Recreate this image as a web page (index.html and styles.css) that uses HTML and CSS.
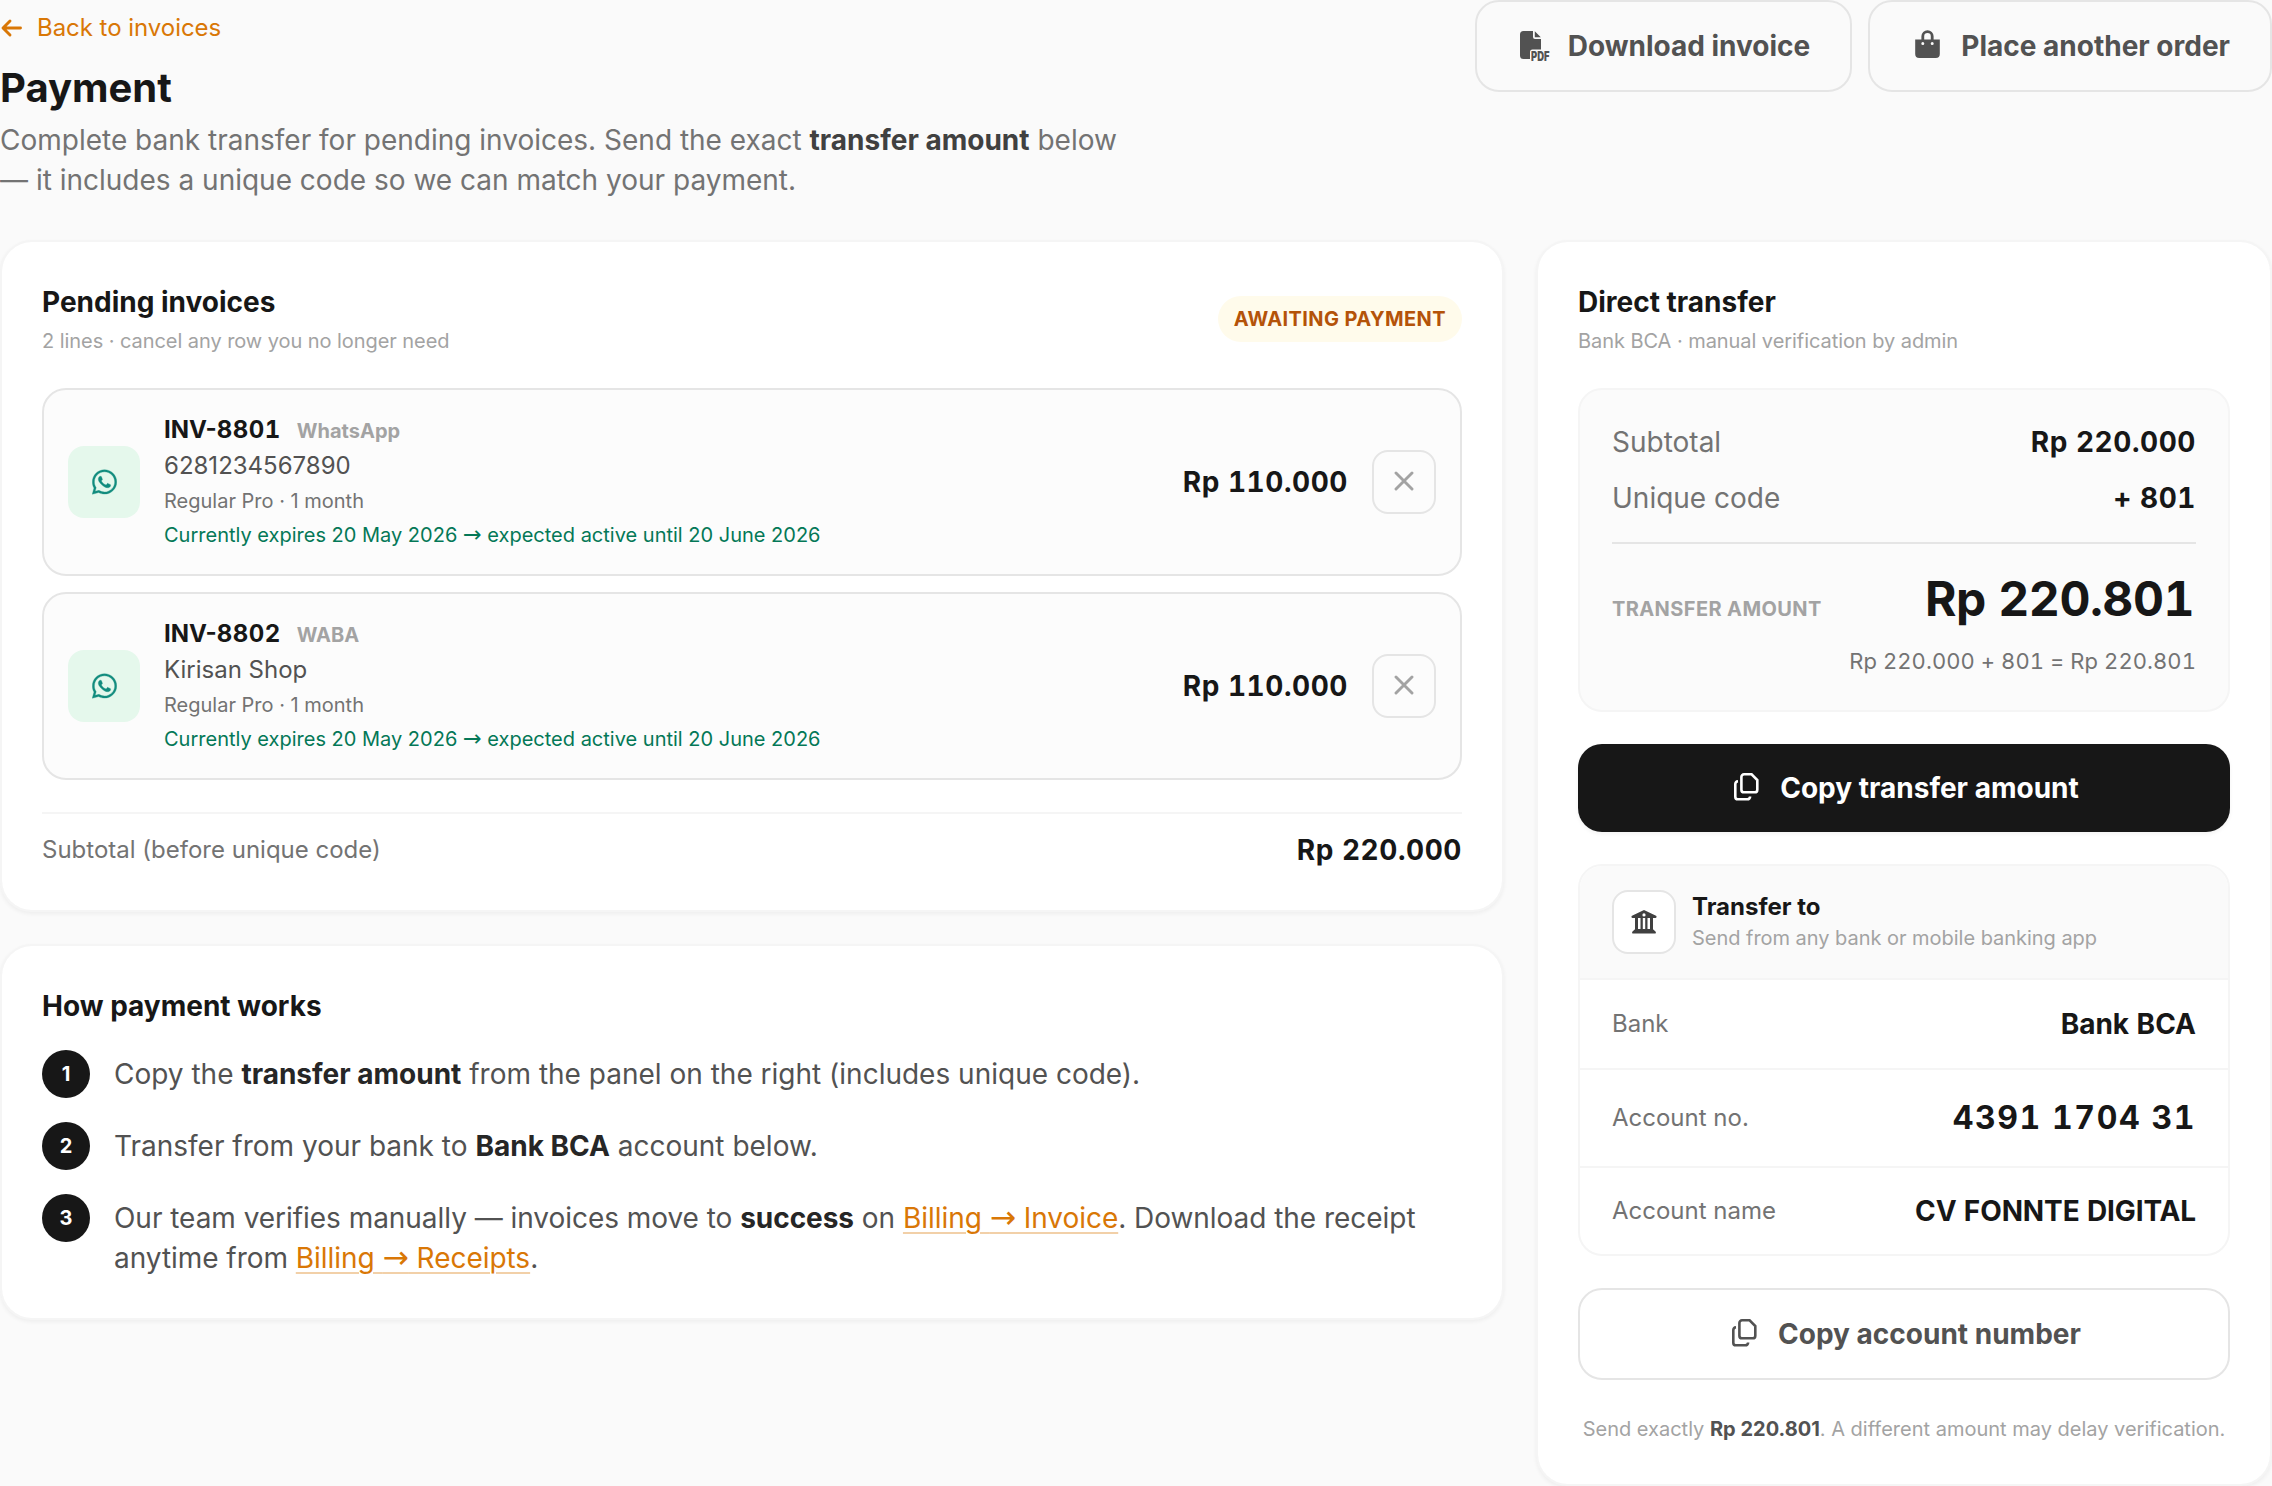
FILE: index.html
```html
<!DOCTYPE html>
<html lang="en">
<head>
<meta charset="utf-8">
<title>Payment</title>
<link rel="stylesheet" href="styles.css">
</head>
<body>
<svg width="0" height="0" class="sprite" aria-hidden="true">
  <symbol id="wa" viewBox="0 0 448 512"><path d="M380.9 97.1C339 55.1 283.2 32 223.9 32c-122.4 0-222 99.6-222 222 0 39.1 10.2 77.3 29.6 111L0 480l117.7-30.9c32.4 17.7 68.9 27 106.1 27h.1c122.3 0 224.1-99.6 224.1-222 0-59.3-25.2-115-67.1-157zm-157 341.6c-33.2 0-65.7-8.9-94-25.7l-6.7-4-69.8 18.3L72 359.2l-4.4-7c-18.5-29.4-28.2-63.3-28.2-98.2 0-101.7 82.8-184.5 184.6-184.5 49.3 0 95.6 19.2 130.4 54.1 34.8 34.9 56.2 81.2 56.1 130.5 0 101.8-84.9 184.6-186.6 184.6zm101.2-138.2c-5.5-2.8-32.8-16.2-37.9-18-5.1-1.9-8.8-2.8-12.5 2.8-3.7 5.6-14.3 18-17.6 21.8-3.2 3.7-6.5 4.2-12 1.4-32.6-16.3-54-29.1-75.5-66-5.7-9.8 5.7-9.1 16.3-30.3 1.8-3.7.9-6.9-.5-9.7-1.4-2.8-12.5-30.1-17.1-41.2-4.5-10.8-9.1-9.3-12.5-9.5-3.2-.2-6.9-.2-10.6-.2-3.7 0-9.7 1.4-14.8 6.9-5.1 5.6-19.4 19-19.4 46.3 0 27.3 19.9 53.7 22.6 57.4 2.8 3.7 39.1 59.7 94.8 83.8 35.2 15.2 49 16.5 66.6 13.9 10.7-1.6 32.8-13.4 37.4-26.4 4.6-13 4.6-24.1 3.2-26.4-1.3-2.5-5-3.900-10.500-6.600z" fill="currentColor" stroke="currentColor" stroke-width="6"/></symbol>
  <symbol id="copy" viewBox="0 0 35 30"><path d="M15 2.3h7.6l5.7 5.7v9.7a2.6 2.6 0 0 1-2.6 2.6H15a2.6 2.6 0 0 1-2.6-2.6V4.9a2.6 2.6 0 0 1 2.6-2.6zM9 9.2a2.9 2.9 0 0 0-2.7 2.8v12.7a2.6 2.6 0 0 0 2.6 2.6h9.5a2.7 2.7 0 0 0 2.7-2.8" fill="none" stroke="currentColor" stroke-width="2.6"/></symbol>
  <symbol id="x" viewBox="0 0 20 20"><path d="M2 2l16 16M18 2L2 18" fill="none" stroke="currentColor" stroke-width="2.9" stroke-linecap="round"/></symbol>
</svg>

<main class="page">
  <header class="top">
    <div class="intro">
      <a class="back"><svg class="back-icon" viewBox="0 0 22 20"><path d="M20 10H2.8M9.5 3L2.5 10l7 7" fill="none" stroke="currentColor" stroke-width="2.9" stroke-linecap="round" stroke-linejoin="round"/></svg>Back to invoices</a>
      <h1>Payment</h1>
      <p>Complete bank transfer for pending invoices. Send the exact <strong>transfer amount</strong> below — it includes a unique code so we can match your payment.</p>
    </div>
    <div class="actions">
      <button class="btn btn-outline"><svg class="btn-icon" viewBox="0 0 35 30"><path d="M6.5 1H16v6a2 2 0 0 0 2 2h6v10.500H15.500a2.500 2.500 0 0 0-2.500 2.500v7H6.500A3.500 3.500 0 0 1 3 25.500v-21A3.500 3.500 0 0 1 6.500 1zM17.800 1.300L23.800 7.300H17.800z" fill="currentColor"/><text class="pdf-label" x="14" y="31" textLength="18.500" lengthAdjust="spacingAndGlyphs">PDF</text></svg>Download invoice</button>
      <button class="btn btn-outline"><svg class="btn-icon" viewBox="0 0 35 30"><path fill-rule="evenodd" d="M5.200 9.500h24.600v14.500a4 4 0 0 1-4 4H9.200a4 4 0 0 1-4-4zM12.800 12a1.500 1.500 0 1 0 0 3 1.500 1.500 0 0 0 0-3zm9.400 0a1.500 1.500 0 1 0 0 3 1.500 1.500 0 0 0 0-3z" fill="currentColor"/><path d="M12.800 10V6.300a4.700 4.700 0 0 1 9.400 0V10" fill="none" stroke="currentColor" stroke-width="2.800"/></svg>Place another order</button>
    </div>
  </header>

  <div class="columns">
    <div class="left">
      <section class="card">
        <div class="card-head">
          <div>
            <h2>Pending invoices</h2>
            <p class="sub">2 lines · cancel any row you no longer need</p>
          </div>
          <span class="badge">AWAITING PAYMENT</span>
        </div>
        <div class="invoices">
          <article class="invoice">
            <span class="tile"><svg><use href="#wa"/></svg></span>
            <div class="info">
              <div class="number"><b><span class="prefix">INV-</span>8801</b> <small>WhatsApp</small></div>
              <div class="name">6281234567890</div>
              <div class="plan">Regular Pro · 1 month</div>
              <div class="expiry">Currently expires 20 May 2026 <span class="arrow">→</span> expected active until 20 June 2026</div>
            </div>
            <span class="price">Rp 110.000</span>
            <button class="close" aria-label="Cancel"><svg><use href="#x"/></svg></button>
          </article>
          <article class="invoice">
            <span class="tile"><svg><use href="#wa"/></svg></span>
            <div class="info">
              <div class="number"><b><span class="prefix">INV-</span>8802</b> <small>WABA</small></div>
              <div class="name">Kirisan Shop</div>
              <div class="plan">Regular Pro · 1 month</div>
              <div class="expiry">Currently expires 20 May 2026 <span class="arrow">→</span> expected active until 20 June 2026</div>
            </div>
            <span class="price">Rp 110.000</span>
            <button class="close" aria-label="Cancel"><svg><use href="#x"/></svg></button>
          </article>
        </div>
        <div class="list-total"><span>Subtotal (before unique code)</span><b class="money">Rp 220.000</b></div>
      </section>

      <section class="card">
        <h2>How payment works</h2>
        <ol class="steps">
          <li><i>1</i><p>Copy the <strong>transfer amount</strong> from the panel on the right (includes unique code).</p></li>
          <li><i>2</i><p>Transfer from your bank to <strong>Bank BCA</strong> account below.</p></li>
          <li><i>3</i><p class="tight">Our team verifies manually — invoices move to <strong>success</strong> on <a>Billing <span class="arrow">→</span> Invoice</a>. Download the receipt anytime from <a>Billing <span class="arrow">→</span> Receipts</a>.</p></li>
        </ol>
      </section>
    </div>

    <section class="card">
      <h2>Direct transfer</h2>
      <p class="sub">Bank BCA · manual verification by admin</p>
      <div class="summary">
        <div class="line"><span>Subtotal</span><b class="money">Rp 220.000</b></div>
        <div class="line"><span>Unique code</span><b class="money">+ 801</b></div>
        <div class="amount"><span>TRANSFER AMOUNT</span><b>Rp 220.801</b></div>
        <p class="formula">Rp 220.000 + 801 = Rp 220.801</p>
      </div>
      <button class="btn btn-dark"><svg class="btn-icon"><use href="#copy"/></svg>Copy transfer amount</button>
      <div class="account">
        <div class="account-head">
          <span class="bank-tile"><svg viewBox="0 0 24 24"><path fill-rule="evenodd" d="M12 0L23.500 5.500a1 1 0 0 1-.4 2.500H.9a1 1 0 0 1-.4-2.500zM12 3.300a1.600 1.600 0 1 0 0 3.200 1.600 1.600 0 0 0 0-3.200zM3 8h3v11h2.500V8h2.300v11h2.400V8h2.300v11H18V8h3v11.200l2.500 2.200c.8.900.4 2.100-.7 2.100H1.200c-1.100 0-1.500-1.200-.7-2.100L3 19.200z" fill="currentColor"/></svg></span>
          <div><h3>Transfer to</h3><p>Send from any bank or mobile banking app</p></div>
        </div>
        <div class="detail"><span>Bank</span><b>Bank BCA</b></div>
        <div class="detail"><span>Account no.</span><b class="digits">4391 1704 31</b></div>
        <div class="detail"><span>Account name</span><b class="holder">CV FONNTE DIGITAL</b></div>
      </div>
      <button class="btn btn-outline btn-wide"><svg class="btn-icon"><use href="#copy"/></svg>Copy account number</button>
      <p class="note">Send exactly <strong>Rp 220.801</strong>. A different amount may delay verification.</p>
    </section>
  </div>
</main>
</body>
</html>
```
FILE: styles.css
```css
* { box-sizing: border-box; margin: 0; padding: 0; }
body {
  background: #fafafa;
  color: #171717;
  font-family: Inter, "Liberation Sans", sans-serif;
  font-size: 28px;
  line-height: 40px;
}
.sprite { position: absolute; }
svg { display: block; flex: none; overflow: visible; }
button { font: inherit; color: inherit; background: none; border: 0; }
.page { width: 2272px; }
.arrow { font-family: "DejaVu Sans", sans-serif; font-size: 1.12em; line-height: 1; }

.top { display: flex; justify-content: space-between; align-items: flex-start; height: 240px; }
.intro { width: 1140px; }
.back { display: flex; align-items: center; gap: 14px; height: 56px; font-size: 24px; letter-spacing: -0.04px; color: #d97706; }
.back-icon { width: 23px; height: 20px; }
h1 { margin: 4px 0; font-size: 40px; line-height: 56px; font-weight: 700; }
.intro p { color: #737373; }
.intro strong { font-weight: 700; color: #404040; }
.actions { display: flex; gap: 16px; }

.btn {
  display: flex; align-items: center; justify-content: center; gap: 16px;
  height: 88px; padding: 0 40px; border-radius: 24px;
  font-weight: 700; white-space: nowrap;
}
.btn-outline { height: 92px; border: 2px solid #e5e5e5; color: #525252; }
.btn-dark { width: 100%; margin: 32px 0; background: #171717; color: #fff; box-shadow: 0 2px 4px rgba(0, 0, 0, .05); }
.btn-wide { width: 100%; background: #fff; }
.btn-icon { width: 35px; height: 30px; margin-bottom: 3px; }
.pdf-label { font-size: 13px; font-weight: 900; fill: currentColor; }

.columns { display: grid; grid-template-columns: 1504px 736px; gap: 32px; align-items: start; }
.left { display: grid; gap: 32px; }
.card {
  padding: 40px; border: 2px solid #f5f5f5; border-radius: 32px;
  background: #fff; background-clip: padding-box;
  box-shadow: 0 2px 4px rgba(0, 0, 0, .05);
}
h2 { font-size: 28px; line-height: 40px; font-weight: 700; }
.sub { margin-top: 4px; font-size: 20px; line-height: 30px; letter-spacing: -0.06px; color: #a3a3a3; }
.card-head { display: flex; justify-content: space-between; align-items: center; margin-bottom: 32px; }
.badge {
  padding: 8px 16px; border-radius: 23px; background: #fffbeb; color: #b45309;
  font-size: 20px; line-height: 30px; font-weight: 700; letter-spacing: .02em;
}
.invoices { display: grid; gap: 16px; }
.invoice {
  display: flex; align-items: center; gap: 24px; height: 188px; padding: 24px;
  border: 2px solid #e5e5e5; border-radius: 24px; background: #fcfcfc;
}
.tile { display: grid; place-items: center; width: 72px; height: 72px; border-radius: 16px; background: #e5f8ec; color: #128c7e; }
.tile svg { width: 25px; height: 28px; }
.info { flex: 1; display: grid; gap: 4px; }
.price, b { font-weight: 700; font-variant-numeric: tabular-nums; }
.price, .money { letter-spacing: .02em; }
.number { display: flex; align-items: baseline; gap: 16px; font-size: 24px; line-height: 32px; font-weight: 700; }
.number b { letter-spacing: .02em; }
.prefix { font-variant-numeric: normal; letter-spacing: 0; }
.number small { font-size: 20px; line-height: 24px; color: #a3a3a3; }
.name { font-size: 24px; line-height: 32px; color: #525252; }
.plan { font-size: 20px; line-height: 30px; color: #737373; }
.expiry { font-size: 20px; line-height: 30px; color: #047857; }
.close { display: grid; place-items: center; width: 64px; height: 64px; border: 2px solid #e5e5e5; border-radius: 16px; color: #a3a3a3; }
.close svg { width: 20px; height: 20px; margin-bottom: 2px; }
.list-total {
  display: flex; justify-content: space-between; align-items: center;
  margin-top: 32px; padding-top: 16px; border-top: 2px solid #f5f5f5;
}
.list-total span { font-size: 24px; color: #737373; }

.steps { display: grid; gap: 24px; margin-top: 24px; list-style: none; }
.steps li { display: flex; align-items: flex-start; gap: 24px; color: #525252; }
.steps i {
  display: grid; place-items: center; flex: none; width: 48px; height: 48px; border-radius: 50%;
  background: #171717; color: #fff; font-style: normal; font-size: 20px; font-weight: 700;
}
.steps p { padding-top: 4px; }
.steps .tight { letter-spacing: -0.04px; }
.steps strong { font-weight: 700; color: #262626; }
.steps a {
  color: #d97706; text-decoration: underline; text-decoration-color: rgba(217, 119, 6, .35);
  text-decoration-thickness: 2px; text-underline-offset: 4px;
}

.summary { margin-top: 32px; padding: 32px; border: 2px solid #f5f5f5; border-radius: 24px; background: #fbfbfb; }
.line { display: flex; justify-content: space-between; }
.line + .line { margin-top: 16px; }
.line span { color: #737373; }
.amount {
  display: flex; justify-content: space-between; align-items: baseline;
  margin-top: 24px; padding-top: 24px; border-top: 2px solid #e5e5e5; line-height: 62px;
}
.amount span { font-size: 20px; line-height: 30px; font-weight: 700; letter-spacing: .02em; color: #a3a3a3; }
.amount b { padding-right: 2px; font-size: 48px; letter-spacing: -0.01em; }
.formula {
  margin-top: 14px; font-size: 22px; line-height: 34px; text-align: right; color: #737373;
  font-variant-numeric: tabular-nums; letter-spacing: .06px;
}

.account { margin-bottom: 32px; border: 2px solid #f5f5f5; border-radius: 24px; overflow: hidden; }
.account-head { display: flex; align-items: center; gap: 16px; padding: 24px 32px; background: #fafafa; }
.bank-tile { display: grid; place-items: center; width: 64px; height: 64px; border: 2px solid #e5e5e5; border-radius: 16px; background: #fff; color: #404040; }
.bank-tile svg { width: 24px; height: 24px; }
h3 { font-size: 24px; line-height: 32px; font-weight: 700; }
.account-head p { font-size: 20px; line-height: 30px; letter-spacing: -0.03px; color: #a3a3a3; }
.detail { display: flex; justify-content: space-between; align-items: center; padding: 24px 32px; border-top: 2px solid #f5f5f5; }
.detail span { font-size: 24px; color: #737373; }
.detail .digits { font-size: 32px; line-height: 48px; letter-spacing: .05em; }
.detail .holder { letter-spacing: -0.12px; }
.detail:last-child { height: 88px; }
.note { margin: 32px 0 -2px; font-size: 20px; line-height: 34px; text-align: center; white-space: nowrap; color: #a3a3a3; }
.note strong { font-weight: 700; color: #525252; }
```
